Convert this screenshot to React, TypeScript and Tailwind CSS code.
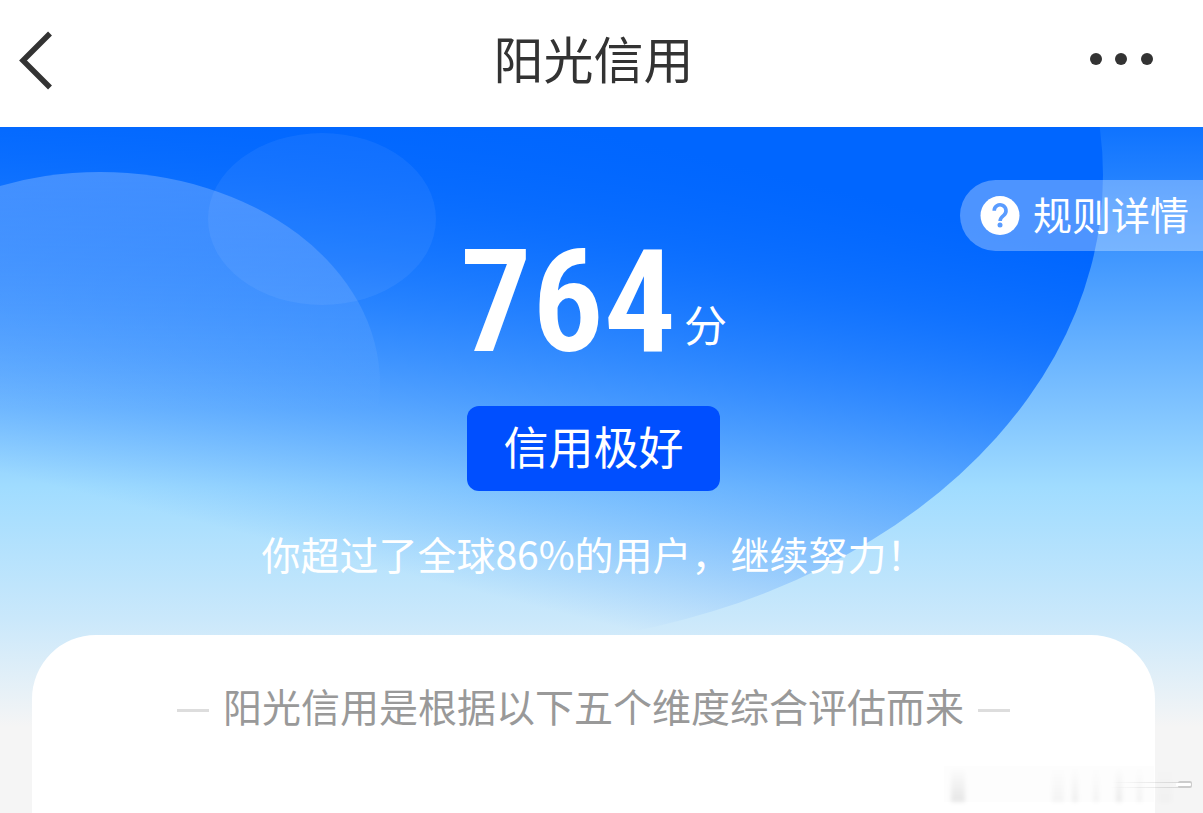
function HeroBackdrop() {
  return (
    <svg
      className="absolute inset-x-0 top-0 w-full h-[686px]"
      viewBox="0 127 1203 686"
      preserveAspectRatio="none"
      aria-hidden="true"
    >
      <defs>
        <linearGradient id="sky" gradientUnits="userSpaceOnUse" x1="0" y1="127" x2="0" y2="727">
          <stop offset="0" stopColor="#0f73ff" />
          <stop offset="0.2" stopColor="#3c94ff" />
          <stop offset="0.45" stopColor="#7bc0ff" />
          <stop offset="0.6" stopColor="#a0dcff" />
          <stop offset="0.82" stopColor="#cae8fb" />
          <stop offset="1" stopColor="#f5f5f5" />
        </linearGradient>
        <linearGradient id="globe" gradientUnits="userSpaceOnUse" x1="600" y1="130" x2="484" y2="594">
          <stop offset="0" stopColor="#0066ff" />
          <stop offset="0.2" stopColor="#0066ff" stopOpacity="0.82" />
          <stop offset="0.5" stopColor="#0066ff" stopOpacity="0.5" />
          <stop offset="1" stopColor="#0066ff" stopOpacity="0" />
        </linearGradient>
        <linearGradient id="bubble" gradientUnits="userSpaceOnUse" x1="0" y1="172" x2="0" y2="410">
          <stop offset="0" stopColor="#fff" stopOpacity="0.23" />
          <stop offset="1" stopColor="#fff" stopOpacity="0" />
        </linearGradient>
      </defs>
      <rect y="127" width="1203" height="686" fill="url(#sky)" />
      <ellipse cx="472" cy="175" rx="631" ry="472" fill="url(#globe)" />
      <ellipse cx="100" cy="384" rx="280" ry="212" fill="url(#bubble)" />
      <ellipse cx="322" cy="219" rx="114" ry="86" fill="#fff" fillOpacity="0.060" />
    </svg>
  );
}

function Header() {
  return (
    <header className="flex items-center justify-between h-[127px] pl-[18px] pr-[48px] pb-2 bg-white text-[#333]">
      <button type="button" aria-label="返回" className="w-20">
        <svg width="36" height="60" viewBox="0 0 36 60" fill="none" stroke="currentColor" strokeWidth="5.500">
          <path d="M32 3.500 5 30.500 32 57.500" />
        </svg>
      </button>
      <h1 className="pb-1.5 text-[50px] leading-[72px]">阳光信用</h1>
      <button type="button" aria-label="更多" className="w-[66px]">
        <svg width="66" height="14" viewBox="0 0 66 14" fill="currentColor">
          <circle cx="7" cy="6" r="6" />
          <circle cx="32" cy="6" r="6" />
          <circle cx="58" cy="6" r="6" />
        </svg>
      </button>
    </header>
  );
}

function RulesButton() {
  return (
    <button
      type="button"
      className="absolute right-0 top-[53px] flex items-center gap-[13px] h-[71px] pl-[20px] pr-[14px] rounded-l-full bg-white/30 text-[39px] text-white"
    >
      <svg width="40" height="40" viewBox="0 0 40 40" fill="none">
        <circle cx="20" cy="19.500" r="19.500" fill="#fff" />
        <path
          d="M14.200 14.800a5.900 5.900 0 1 1 9.600 4.500c-2.200 1.700-3.700 2.800-3.700 5.700"
          stroke="#5a9cff"
          strokeWidth="3.600"
        />
        <circle cx="20" cy="29" r="2.500" fill="#5a9cff" />
      </svg>
      <span className="pb-1.5 leading-[56px]">规则详情</span>
    </button>
  );
}

/* Soft smudge in the corner of the page */
function Smudge() {
  return (
    <svg className="absolute right-0 bottom-0" width="283" height="73" viewBox="0 0 283 73" aria-hidden="true">
      <defs>
        <filter id="soft" x="-20%" y="-20%" width="140%" height="140%">
          <feGaussianBlur stdDeviation="2" />
        </filter>
        <linearGradient id="down" x1="0" y1="0" x2="0" y2="1">
          <stop offset="0" stopColor="#000" stopOpacity="0" />
          <stop offset="1" stopColor="#000" stopOpacity="0.090" />
        </linearGradient>
        <linearGradient id="streak" x1="0" y1="0" x2="1" y2="0">
          <stop offset="0" stopColor="#000" stopOpacity="0" />
          <stop offset="1" stopColor="#000" stopOpacity="0.120" />
        </linearGradient>
      </defs>
      <rect x="24" y="26" width="210" height="36" fill="#000" fillOpacity="0.006" />
      <g filter="url(#soft)" fill="url(#down)">
        <rect x="31" y="28" width="14" height="34" />
        <rect x="132" y="28" width="12" height="34" fillOpacity="0.400" />
        <rect x="152" y="28" width="6" height="34" fillOpacity="0.600" />
        <rect x="173" y="28" width="6" height="34" fillOpacity="0.400" />
        <rect x="196" y="28" width="6" height="34" fillOpacity="0.800" />
        <rect x="217" y="28" width="5" height="34" fillOpacity="0.500" />
        <rect x="238" y="28" width="14" height="34" fillOpacity="0.200" />
      </g>
      <rect x="190" y="42" width="70" height="1" fill="url(#streak)" />
      <rect x="190" y="47" width="70" height="1" fill="url(#streak)" />
      <rect x="258" y="41" width="14" height="7" rx="2" fill="#ccc" />
      <rect x="256" y="43" width="15" height="3" rx="1" fill="#fff" />
    </svg>
  );
}

export default function App() {
  return (
    <div className="relative min-h-screen flex flex-col bg-[#f5f5f5] font-['Noto_Sans_CJK_SC',sans-serif]">
      <Header />
      <main className="relative flex-1 flex flex-col">
        <HeroBackdrop />
        <RulesButton />

        <section className="relative flex flex-col items-center pt-[110px] pr-4 pb-[50px] text-white">
          <p className="flex items-end gap-2">
            <span className="font-['Roboto_Condensed',Roboto,sans-serif] font-semibold text-[143px] leading-[130px]">
              764
            </span>
            <span className="pb-[14px] text-[43px] leading-[60px]">分</span>
          </p>
          <p className="mt-[39px] px-[36px] h-[85px] rounded-xl bg-[#004fff] text-[45px] leading-[80px]">信用极好</p>
          <p className="mt-[31px] text-[39px] leading-[63px]">你超过了全球86%的用户，继续努力！</p>
        </section>

        <section className="relative flex-1 ml-8 mr-12 pt-[41px] rounded-t-[64px] bg-white">
          <h2 className="flex items-center justify-center gap-[14px] text-[39px] leading-[58px] text-[#999]">
            <span className="w-8 h-[3px] mt-[10px] bg-[#ddd]" />
            阳光信用是根据以下五个维度综合评估而来
            <span className="w-8 h-[3px] mt-[10px] bg-[#ddd]" />
          </h2>
        </section>
      </main>
      <Smudge />
    </div>
  );
}
